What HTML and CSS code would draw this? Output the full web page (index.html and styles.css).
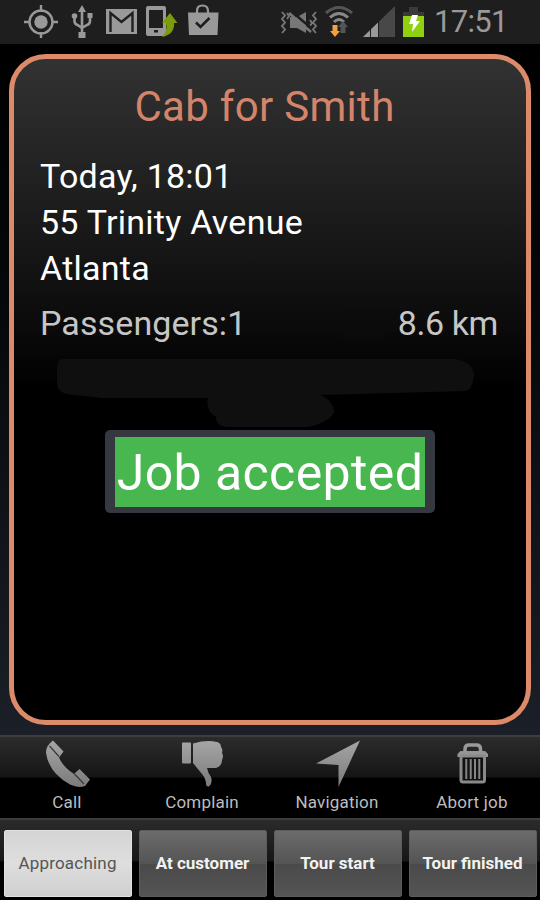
FILE: index.html
```html
<!DOCTYPE html>
<html lang="en">
<head>
    <meta charset="UTF-8">
    <meta name="viewport" content="width=device-width, initial-scale=1.0">
    <title>Cab for Smith</title>
    <link rel="stylesheet" href="styles.css">
</head>
<body>
    <div class="status-bar">
        <div class="status-left">
            <svg width="36" height="36" viewBox="23 4 36 36">
                <g fill="none" stroke="#999" stroke-width="2.4">
                    <circle cx="41" cy="22" r="11.5"/>
                    <path d="M41 5v7M41 32v6M24 22h6M52 22h6"/>
                </g>
                <circle cx="41" cy="22" r="6.7" fill="#999"/>
            </svg>
            <svg width="24" height="36" viewBox="70 4 24 36">
                <g fill="none" stroke="#999" stroke-width="2.6">
                    <path d="M82 10v25M74.500 17v4q0 3 3 4l4.500 3M90 17v4q0 3-3 4l-5 3"/>
                </g>
                <path d="M82 5l4 7h-8zM87.500 13h5v5h-5zM78.500 32h7v6h-7z" fill="#999"/>
                <circle cx="74.500" cy="16" r="2.800" fill="#999"/>
            </svg>
            <svg width="32" height="36" viewBox="106 4 32 36">
                <rect x="106" y="9" width="31" height="25" fill="#999"/>
                <path d="M110.500 32V13L121.500 22l11-9V32" fill="none" stroke="#1e1e1e" stroke-width="2.400"/>
            </svg>
            <svg width="32" height="36" viewBox="146 4 32 36">
                <path d="M148 6h16q2 0 2 2v26q0 2-2 2h-16q-2 0-2-2V8q0-2 2-2zM149 10v18h14V10z" fill="#999" fill-rule="evenodd"/>
                <rect x="154" y="30" width="4" height="2.500" fill="#1e1e1e"/>
                <path d="M170 13l7.500 10h-3.500q1 11-12 14q6-6 4-14h-4z" fill="#7c9c0b"/>
            </svg>
            <svg width="32" height="36" viewBox="188 4 32 36">
                <path d="M197 13v-2q0-5.500 5.500-5.500t5.500 5.500v2" fill="none" stroke="#999" stroke-width="2.200"/>
                <path d="M188 12.500h30.500l-1 22.500h-28.500z" fill="#999"/>
                <path d="M196 22.500l4.500 4.500 9-9" fill="none" stroke="#1e1e1e" stroke-width="2.600"/>
            </svg>
        </div>
        <div class="status-right">
            <svg width="38" height="36" viewBox="281 4 38 36">
                <g fill="none" stroke="#777" stroke-width="1.900">
                    <path d="M283 12l3 3.500-3 3.500 3 3.500-3 3.500 3 3.500-3 3.500M288 13l2 3-2 3M317 12l-3 3.500 3 3.500-3 3.500 3 3.500-3 3.500 3 3.500M311 20l2 3-2 3"/>
                </g>
                <path d="M291 17h7l9-5v21l-9-5h-7z" fill="#777"/>
                <path d="M292 11l20 17" stroke="#1e1e1e" stroke-width="2.500"/>
                <path d="M290 13l22 19" stroke="#777" stroke-width="2.600"/>
            </svg>
            <svg width="28" height="36" viewBox="326 4 28 36">
                <g fill="none">
                    <path d="M327 13q13-11 26 0" stroke="#555" stroke-width="3"/>
                    <path d="M331 17.500q9-8 18 0" stroke="#888" stroke-width="3"/>
                    <path d="M335 22q5-5 10 0" stroke="#888" stroke-width="3"/>
                </g>
                <path d="M344 21l5 6h-2.500v6h-5v-6h-2.500z" fill="#555"/>
                <path d="M333.500 25h5v6h2.500l-5 6-5-6h2.500z" fill="#f5a040"/>
            </svg>
            <svg width="32" height="36" viewBox="364 4 32 36">
                <path d="M396 6v31h-32z" fill="#484848"/>
                <path d="M379 22.500V37h-15z" fill="#999"/>
                <path d="M371.500 28v9M379.500 20v17" stroke="#1e1e1e" stroke-width="1"/>
            </svg>
            <svg width="22" height="36" viewBox="404 4 22 36">
                <path d="M410 7h9v5h6v5h-21v-5h6z" fill="#3a3a3a"/>
                <rect x="404" y="16" width="21" height="21" fill="#8fd00f"/>
                <path d="M413 15h6l-2 6h4l-8 11 1-8h-4z" fill="#fff"/>
            </svg>
            <span class="clock">17:51</span>
        </div>
    </div>

    <div class="main">
        <div class="job-card">
            <svg class="smudge" width="512" height="661" viewBox="14 59 512 661">
                <path d="M332 315q30-8 68-6v22q-20 11-48 10-22-2-20-26z" fill="#0c0c0c" opacity=".5"/>
                <path d="M62 359H455Q474 362 474 376Q472 390 466 391L320 395Q334 401 334 412Q330 422 308 427H226Q215 425 216 417Q205 410 208 398H102L66 394Q57 391 57 384V368Q57 360 62 359Z" fill="#0f0f0f"/>
            </svg>
            <h1>Cab for Smith</h1>
            <div class="address">
                <div>Today, 18:01</div>
                <div>55 Trinity Avenue</div>
                <div>Atlanta</div>
            </div>
            <div class="details">
                <span>Passengers:1</span>
                <span class="distance">8.6 km</span>
            </div>
        </div>
        <div class="toast"><div class="toast-text">Job accepted</div></div>
    </div>

    <svg class="defs" width="0" height="0">
        <linearGradient id="metal" x1="0" y1="0" x2="0" y2="1">
            <stop offset="0" stop-color="#a5a5a5"/>
            <stop offset="1" stop-color="#7b7b7b"/>
        </linearGradient>
    </svg>

    <div class="actions">
        <div class="action">
            <svg width="48" height="50" viewBox="43 738 48 50">
                <path d="M53 740.500L63.500 751.500L59 757.500Q63 767 74 774L79.500 769L90 779.500L85 786Q78 788.500 70 784.500Q49 773 46 753Q45.500 746 53 740.500Z" fill="url(#metal)"/>
                <path d="M49.500 746l9.500 10.500M74 773.500l10 10.500" stroke="#383838" stroke-width="1.200"/>
            </svg>
            <span>Call</span>
        </div>
        <div class="action">
            <svg width="48" height="50" viewBox="178 738 48 50">
                <path d="M183 742.500h7q1 0 1 1v19q0 1-1 1h-7q-1 0-1-1v-19q0-1 1-1zM193 743.500Q207 739.500 217 742Q221 743 221 747Q223 749 222 753Q224 756 222 760Q222 766 216 768H207Q208 773 211 777Q213 783 209 786.500Q206 787 206 784Q206 779 202 774Q197 768 193 763Z" fill="url(#metal)"/>
            </svg>
            <span>Complain</span>
        </div>
        <div class="action">
            <svg width="48" height="50" viewBox="313 738 48 50">
                <path d="M360 740.500L338.500 787V765L316 763.500Z" fill="url(#metal)"/>
            </svg>
            <span>Navigation</span>
        </div>
        <div class="action">
            <svg width="48" height="50" viewBox="448 738 48 50">
                <path d="M465 753v-4q0-4 4-4h7.500q4 0 4 4v4" fill="none" stroke="#999" stroke-width="3.500"/>
                <path d="M460.500 751h24.500l3 3v3h-30.500v-3z" fill="#969696"/>
                <path d="M461 756v24q0 2 2 2h19.500q2 0 2-2V756z" fill="#111" stroke="#8a8a8a" stroke-width="3"/>
                <path d="M466.300 759v20M470.700 759v20M475 759v20M479.300 759v20" stroke="#858585" stroke-width="2"/>
            </svg>
            <span>Abort job</span>
        </div>
    </div>

    <div class="tabs">
        <button class="tab active">Approaching</button>
        <button class="tab">At customer</button>
        <button class="tab">Tour start</button>
        <button class="tab">Tour finished</button>
    </div>
</body>
</html>
```
FILE: styles.css
```css
* {
    box-sizing: border-box;
}
body {
    margin: 0;
    width: 540px;
    height: 900px;
    overflow: hidden;
    display: flex;
    flex-direction: column;
    font-family: Roboto, "Liberation Sans", sans-serif;
    background: #000;
    color: #fff;
}
.status-bar {
    height: 44px;
    padding: 4px 34px 0 23px;
    display: flex;
    justify-content: space-between;
    background: #1e1e1e;
}
.status-left, .status-right {
    display: flex;
    height: 36px;
}
.status-left {
    gap: 10px;
}
.status-left svg:nth-child(2) {
    margin-left: 1px;
}
.status-left svg:nth-child(3) {
    margin-left: 2px;
}
.status-left svg:nth-child(4) {
    margin-left: -2px;
}
.status-right {
    gap: 8px;
}
.status-right svg:nth-child(2) {
    margin-left: -1px;
}
.status-right svg:nth-child(3) {
    margin-left: 2px;
}
.clock {
    width: 72px;
    margin-left: 1px;
    font-size: 31px;
    line-height: 36px;
    letter-spacing: -0.7px;
    color: #999;
}
.main {
    position: relative;
    height: 691px;
    padding: 10px 9px;
    background: linear-gradient(#000, #06080b 40%, #1b1f27);
}
.job-card {
    position: relative;
    height: 671px;
    border: 5px solid #dc8a6a;
    border-radius: 37px;
    padding: 0 28px 0 26px;
    background: linear-gradient(#323232, #1d1d1d 22%, #0b0b0b 40%, #000 50%);
}
.smudge {
    position: absolute;
    left: 0;
    top: 0;
}
h1 {
    position: relative;
    margin: 0;
    padding: 24px 9px 0 0;
    font-size: 42px;
    font-weight: 400;
    line-height: 48px;
    letter-spacing: 0.3px;
    text-align: center;
    color: #d4846a;
}
.address {
    position: relative;
    padding-top: 22px;
    font-size: 34px;
    line-height: 46px;
    letter-spacing: 0.25px;
}
.details {
    position: relative;
    display: flex;
    justify-content: space-between;
    padding-top: 9px;
    font-size: 34px;
    line-height: 46px;
    letter-spacing: 0.1px;
    color: #c6c6c6;
}
.distance {
    letter-spacing: -0.4px;
}
.toast {
    position: absolute;
    left: 105px;
    top: 386px;
    width: 330px;
    height: 83px;
    padding: 7px 10px 6px;
    border-radius: 5px;
    background: #36383f;
}
.toast-text {
    height: 70px;
    font-size: 50px;
    line-height: 72px;
    letter-spacing: 0.4px;
    text-align: center;
    white-space: nowrap;
    background: #48b750;
}
.defs {
    position: absolute;
}
.actions {
    height: 83px;
    display: grid;
    grid-template-columns: repeat(4, 1fr);
    border-top: 2px solid #3c3d3d;
    background: linear-gradient(#2c2c2c, #151515 40px, #000 41px);
}
.action {
    display: flex;
    flex-direction: column;
    align-items: center;
    padding: 1px 1px 0 0;
    font-size: 17px;
    line-height: 28px;
    letter-spacing: 0.2px;
    color: #bdbdbd;
}
.action svg {
    display: block;
}
.tabs {
    height: 82px;
    display: grid;
    grid-template-columns: repeat(4, 128px);
    gap: 7px;
    padding: 10px 3px 3px 4px;
    border-top: 2px solid #3c3d3d;
    background: linear-gradient(#2b2b2b, #161616 41px, #000 42px);
}
.tab {
    padding: 0 1px 2px 0;
    border: 1px solid #5c5c5c;
    border-radius: 2px;
    font-family: inherit;
    font-size: 17px;
    font-weight: 700;
    color: #f2f2f2;
    background: linear-gradient(#6c6c6c, #545454 50%, #4a4a4a 51%, #545454);
}
.tab.active {
    font-weight: 400;
    letter-spacing: 0.2px;
    color: #555;
    border-color: #e2e2e2;
    background: linear-gradient(#d4d4d4, #dedede 50%, #cfcfcf);
}
```
